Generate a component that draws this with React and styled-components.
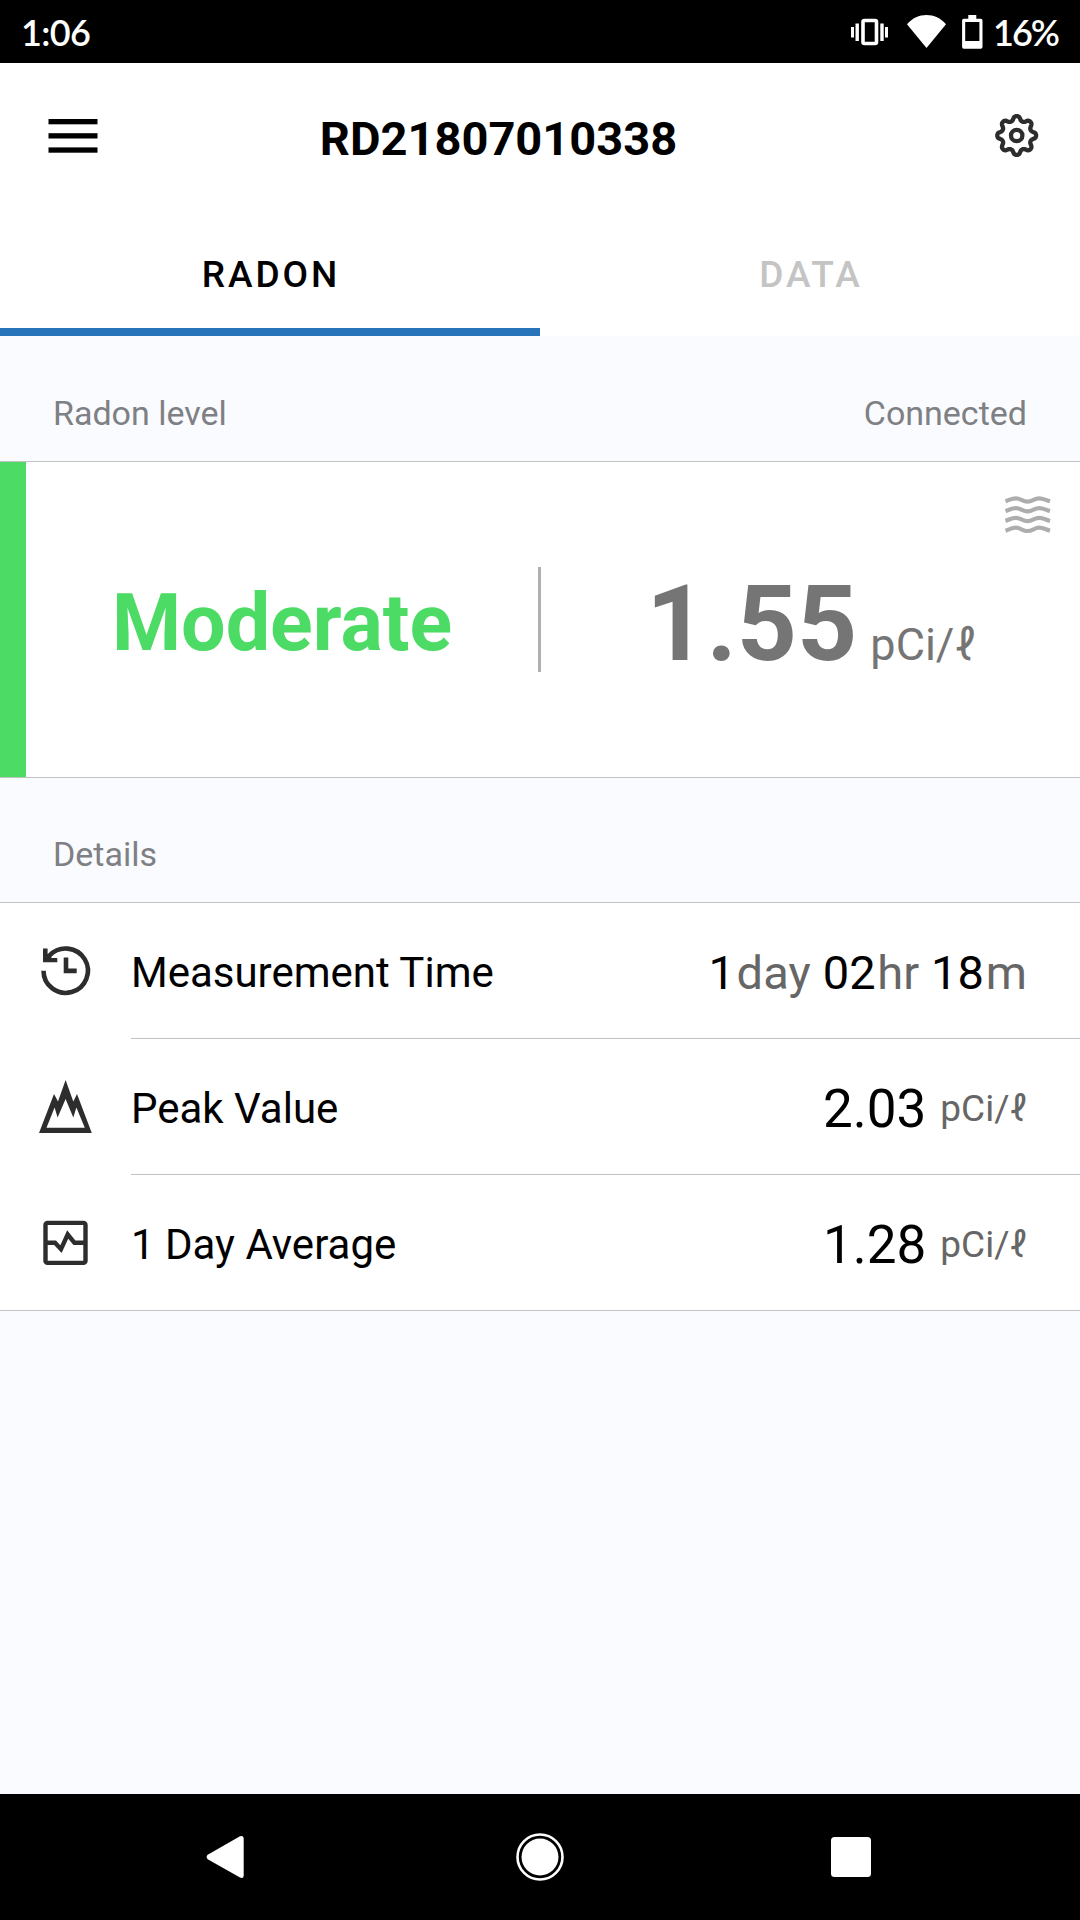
import styled, { createGlobalStyle } from "styled-components";

const GlobalStyle = createGlobalStyle`
  * {
    box-sizing: border-box;
  }

  body {
    margin: 0;
    background: #fafbff;
    font-family: Roboto, "Noto Sans", sans-serif;
  }

  svg {
    display: block;
    flex: none;
  }
`;

const Screen = styled.div`
  width: 1080px;
  height: 1920px;
  display: flex;
  flex-direction: column;
  overflow: hidden;
`;

const StatusBar = styled.header`
  height: 63px;
  padding: 0 22px 0 21px;
  display: flex;
  align-items: center;
  justify-content: space-between;
  background: #000;
  color: #fff;
  font-family: Lato, sans-serif;
  font-size: 36px;
  font-weight: 600;
`;

const Clock = styled.span`
  padding-top: 1px;
  letter-spacing: -0.6px;
`;

const StatusIcons = styled.div`
  display: flex;
  align-items: center;

  svg:nth-child(2) {
    margin: 0 16px 0 18px;
  }
`;

const BatteryLevel = styled.span`
  margin-left: 10px;
  padding-top: 1px;
  letter-spacing: -2px;
`;

const Toolbar = styled.div`
  height: 147px;
  padding: 0 41px 1px 48px;
  display: flex;
  align-items: center;
  background: #fff;
`;

const Title = styled.h1`
  flex: 1;
  margin: 0;
  padding: 5px 96px 0 0;
  text-align: center;
  font-size: 47px;
  font-weight: 700;
`;

const Tabs = styled.nav`
  display: flex;
  height: 126px;
  background: #fff;
`;

const Tab = styled.div`
  flex: 1;
  padding: 10px 0 0 2px;
  display: flex;
  align-items: center;
  justify-content: center;
  font-size: 37px;
  font-weight: 500;
  letter-spacing: 3px;
  color: ${(props) => (props.$active ? "#000" : "#c4c4c4")};
  border-bottom: 8px solid ${(props) => (props.$active ? "#2874bb" : "#fff")};
`;

const SectionHeader = styled.div`
  height: ${(props) => (props.$compact ? "124px" : "125px")};
  padding: ${(props) => (props.$compact ? "27px" : "29px")} 53px 0;
  display: flex;
  align-items: center;
  justify-content: space-between;
  font-size: 34px;
  color: #7e8084;
`;

const LevelCard = styled.section`
  position: relative;
  height: 317px;
  display: flex;
  align-items: center;
  background: #fff;
  border: solid #c0c2c4;
  border-width: 1px 0;
`;

const LevelStripe = styled.div`
  align-self: stretch;
  width: 26px;
  background: #4cdb64;
`;

const LevelName = styled.div`
  width: 512px;
  padding-top: 7px;
  text-align: center;
  font-size: 79px;
  font-weight: 700;
  color: #4cdb64;
`;

const Divider = styled.div`
  width: 3px;
  height: 105px;
  background: #b0b0b0;
`;

const Reading = styled.div`
  flex: 1;
  padding: 10px 0 0 1px;
  display: flex;
  align-items: baseline;
  justify-content: center;
  gap: 13px;
  color: #757575;
  font-size: 45px;

  strong {
    font-size: 105px;
  }
`;

const WaveBadge = styled.div`
  position: absolute;
  top: 34px;
  right: 29px;
`;

const DetailList = styled.section`
  background: #fff;
  border: solid #c0c2c4;
  border-width: 1px 0;
`;

const DetailRow = styled.div`
  display: flex;
  height: ${(props) => (props.$last ? "135px" : "136px")};
`;

const DetailIcon = styled.div`
  width: 131px;
  padding-left: 36px;
  display: flex;
  align-items: center;
`;

const DetailBody = styled.div`
  flex: 1;
  padding: 4px 53px 0 0;
  display: flex;
  align-items: center;
  justify-content: space-between;
  font-size: 42px;
  color: #000;
  border-bottom: ${(props) => (props.$last ? "none" : "1px solid #c0c2c4")};
`;

const Duration = styled.div`
  font-size: 47px;
  letter-spacing: 0.1px;

  em {
    margin-left: 1.6px;
    font-style: normal;
    color: #666;
  }
`;

const Amount = styled.div`
  display: flex;
  align-items: center;
  gap: 14px;
  font-size: 53px;

  em {
    font-style: normal;
    font-size: 37px;
    color: #666;
  }
`;

const NavBar = styled.footer`
  margin-top: auto;
  height: 126px;
  padding: 0 209px 0 206px;
  display: flex;
  align-items: center;
  justify-content: space-between;
  background: #000;

  svg:nth-child(2) {
    margin-left: 5px;
  }
`;

const VibrateIcon = () => (
  <svg width="38" height="28" viewBox="0 0 38 28" fill="#fff">
    <rect x="12" y="2.5" width="13.5" height="23" rx="1.5" fill="none" stroke="#fff" strokeWidth="3.6" />
    <rect x="4.5" y="5.5" width="3.4" height="17.5" />
    <rect x="0" y="9" width="3" height="10.5" />
    <rect x="29.3" y="5.5" width="3.4" height="17.5" />
    <rect x="34" y="9" width="3" height="10.5" />
  </svg>
);

const WifiIcon = () => (
  <svg width="39" height="33" viewBox="0 0 39 33" fill="#fff">
    <path d="M0 9.2C5.5 3 12 0 19.5 0S33.5 3 39 9.2L19.5 33Z" />
  </svg>
);

const BatteryIcon = () => (
  <svg width="21" height="34" viewBox="0 0 21 34" fill="#fff">
    <path
      fillRule="evenodd"
      d="M6.3 0h8v3.7h4.5a1.7 1.7 0 0 1 1.7 1.7v26.6a1.7 1.7 0 0 1-1.7 1.7h-17a1.7 1.7 0 0 1-1.7-1.7v-26.6a1.7 1.7 0 0 1 1.7-1.7h4.5ZM3.2 7v19h14.2v-19Z"
    />
  </svg>
);

const MenuIcon = () => (
  <svg width="50" height="34" viewBox="0 0 50 34" fill="#000">
    <rect x="0.5" y="0" width="49" height="5.3" />
    <rect x="0.5" y="14.2" width="49" height="5.3" />
    <rect x="0.5" y="28.4" width="49" height="5.3" />
  </svg>
);

// eight soft teeth around the hub
const gearOutline = Array.from({ length: 144 }, (_, i) => {
  const a = (i / 144) * Math.PI * 2;
  const r = 17.2 + (2.2 * Math.tanh(1.3 * Math.cos(8 * a))) / Math.tanh(1.3);
  return `${(21.7 + r * Math.cos(a)).toFixed(2)},${(21.5 + r * Math.sin(a)).toFixed(2)}`;
}).join(" ");

const GearIcon = () => (
  <svg width="44" height="44" viewBox="0 0 44 44" fill="none" stroke="#2d2d2d" strokeWidth="4.3">
    <polygon points={gearOutline} strokeLinejoin="round" />
    <circle cx="21.7" cy="21.5" r="5.7" />
  </svg>
);

const WavesIcon = () => (
  <svg width="46" height="38" viewBox="0 0 46 38" fill="none" stroke="#adadad" strokeWidth="4.2">
    {[0.3, 10.1, 19.9, 29.7].map((y) => (
      <path
        key={y}
        d={`M0.5 ${y + 5}C5 ${y + 3.5} 6.5 ${y + 2} 11 ${y + 2}S17.5 ${y + 5.3} 22.5 ${y + 5.3}S29.5 ${y + 2} 34 ${y + 2}S40 ${y + 3.5} 45 ${y + 5}`}
      />
    ))}
  </svg>
);

const HistoryIcon = () => (
  <svg width="60" height="60" viewBox="36 941 60 60" fill="none" stroke="#2d2d2d" strokeWidth="4.6">
    <path d="M43.5 970.7A22.2 22.2 0 1 0 49.5 955.5" />
    <path d="M43 948.5H47.6V954H50.5L51.5 958H57.3V962.3H43Z" fill="#2d2d2d" stroke="none" />
    <path d="M66 957.5V970.9H76.7" />
  </svg>
);

const PeakIcon = () => (
  <svg width="60" height="60" viewBox="36 1077 60 60" fill="#2d2d2d">
    <path
      fillRule="evenodd"
      d="M39 1133L54 1094L58 1101.5L65.6 1080L73.3 1101.5L77 1094L91.8 1133ZM46.5 1127.7H84.8L76.4 1107.5L73.3 1117.5L65.6 1099L57.6 1117.5L54.6 1107.5Z"
    />
  </svg>
);

const AverageIcon = () => (
  <svg width="60" height="60" viewBox="36 1212.5 60 60" fill="none" stroke="#2d2d2d" strokeWidth="4.4">
    <rect x="45.5" y="1222.4" width="40" height="40" rx="2" />
    <path d="M46 1242.3H55L61 1248.7L67.7 1234L74.5 1242.3H86" />
  </svg>
);

const BackIcon = () => (
  <svg width="38" height="44" viewBox="0 0 38 44" fill="#fff">
    <path d="M1.7 19.8L34 1.3Q37.7 0 37.7 3.5V40.5Q37.7 44 34 42.6L1.7 24.2Q-0.5 22 1.7 19.8Z" />
  </svg>
);

const HomeIcon = () => (
  <svg width="48" height="48" viewBox="0 0 48 48">
    <circle cx="24" cy="24" r="22.5" fill="none" stroke="#fff" strokeWidth="2.6" />
    <circle cx="24" cy="24" r="18.5" fill="#fff" />
  </svg>
);

const RecentIcon = () => (
  <svg width="40" height="40" viewBox="0 0 40 40">
    <rect width="40" height="40" rx="3.5" fill="#fff" />
  </svg>
);

const App = () => {
  return (
    <Screen>
      <GlobalStyle />
      <StatusBar>
        <Clock>1:06</Clock>
        <StatusIcons>
          <VibrateIcon />
          <WifiIcon />
          <BatteryIcon />
          <BatteryLevel>16%</BatteryLevel>
        </StatusIcons>
      </StatusBar>
      <Toolbar>
        <MenuIcon />
        <Title>RD21807010338</Title>
        <GearIcon />
      </Toolbar>
      <Tabs>
        <Tab $active>RADON</Tab>
        <Tab>DATA</Tab>
      </Tabs>
      <SectionHeader>
        <span>Radon level</span>
        <span>Connected</span>
      </SectionHeader>
      <LevelCard>
        <LevelStripe />
        <LevelName>Moderate</LevelName>
        <Divider />
        <Reading>
          <strong>1.55</strong>
          <span>pCi/ℓ</span>
        </Reading>
        <WaveBadge>
          <WavesIcon />
        </WaveBadge>
      </LevelCard>
      <SectionHeader $compact>
        <span>Details</span>
      </SectionHeader>
      <DetailList>
        <DetailRow>
          <DetailIcon>
            <HistoryIcon />
          </DetailIcon>
          <DetailBody>
            <span>Measurement Time</span>
            <Duration>
              1<em>day</em> 02<em>hr</em> 18<em>m</em>
            </Duration>
          </DetailBody>
        </DetailRow>
        <DetailRow>
          <DetailIcon>
            <PeakIcon />
          </DetailIcon>
          <DetailBody>
            <span>Peak Value</span>
            <Amount>
              2.03<em>pCi/ℓ</em>
            </Amount>
          </DetailBody>
        </DetailRow>
        <DetailRow $last>
          <DetailIcon>
            <AverageIcon />
          </DetailIcon>
          <DetailBody $last>
            <span>1 Day Average</span>
            <Amount>
              1.28<em>pCi/ℓ</em>
            </Amount>
          </DetailBody>
        </DetailRow>
      </DetailList>
      <NavBar>
        <BackIcon />
        <HomeIcon />
        <RecentIcon />
      </NavBar>
    </Screen>
  );
};

export default App;
